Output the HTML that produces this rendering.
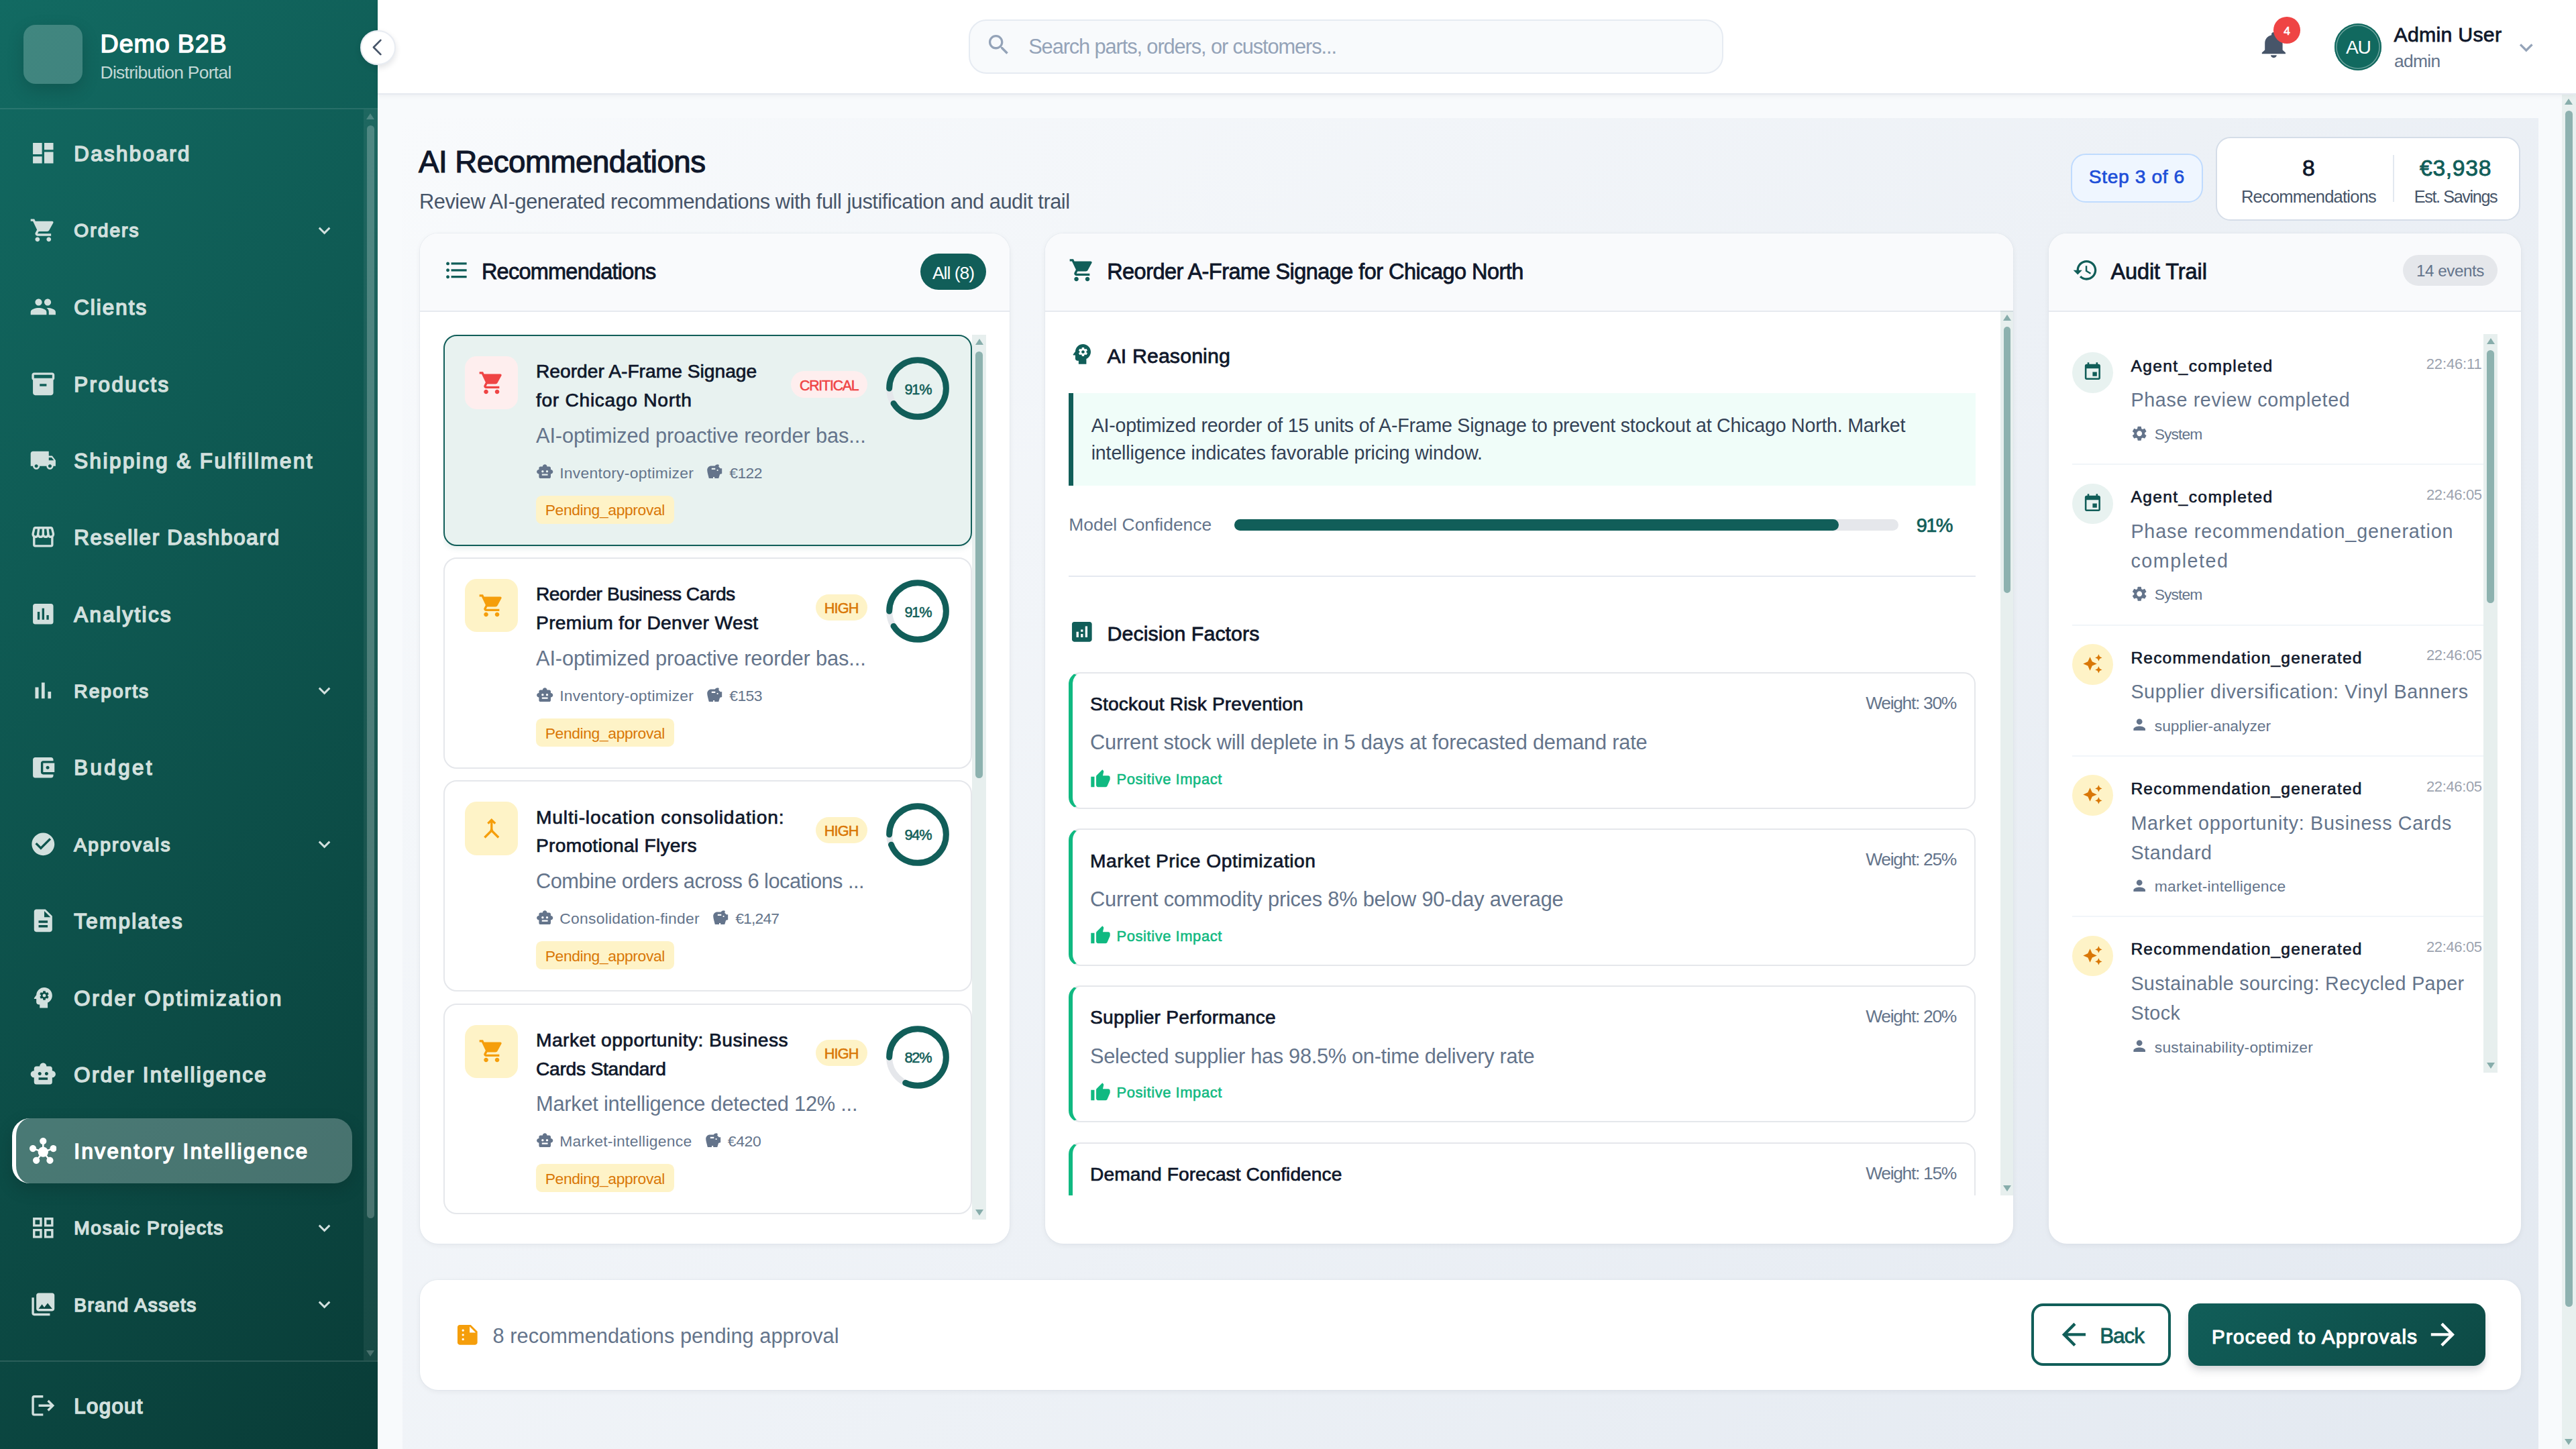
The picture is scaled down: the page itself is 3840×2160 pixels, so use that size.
<!DOCTYPE html>
<html lang="en"><head><meta charset="utf-8"><title>AI Recommendations - Demo B2B Distribution Portal</title>
<style>
*{box-sizing:border-box;margin:0;padding:0}
html,body{width:3840px;height:2160px;overflow:hidden;background:#f8fafc}
body{font-family:"Liberation Sans",sans-serif;color:#0f172a;-webkit-font-smoothing:antialiased}
.app{position:relative;width:3840px;height:2160px;overflow:hidden}
.t{position:relative;top:var(--sh,.0675em);white-space:nowrap}
.ic{display:block;flex:none}
a{text-decoration:none}
h1,h2,h3{font-weight:400;-webkit-text-stroke:.025em currentColor;--sh:.074em}

/* sidebar */
.sb{position:absolute;left:0;top:0;width:563px;height:2160px;background:linear-gradient(135deg,rgb(18,106,98) 0%,rgb(9,60,55) 100%);color:#fff}
.sb-h{position:absolute;left:0;top:0;width:563px;height:163px;border-bottom:2px solid rgba(255,255,255,.1)}
.logo{position:absolute;left:35px;top:36.5px;width:88px;height:88px;border-radius:18px;background:rgba(255,255,255,.2);box-shadow:0 9px 26px rgba(0,0,0,.15)}
.brand{position:absolute;left:149.6px;top:36.7px}
.b1{font-size:37.6px;font-weight:400;-webkit-text-stroke:.04em currentColor;--sh:.105em;line-height:49.5px;color:#fff}
.b2{font-size:26.4px;line-height:39.6px;margin-top:1px;color:rgba(255,255,255,.75)}
.nav{position:absolute;left:0;top:163px;width:542.6px;height:1865px;padding:17.4px 17.6px 0;overflow:hidden}
.ni{display:flex;align-items:center;height:96.8px;margin-bottom:17.6px;padding:0 24px 0 20.2px;border-left:6.6px solid transparent;border-radius:26.4px;color:#d2e0de;font-size:31.2px;font-weight:400;-webkit-text-stroke:.052em currentColor;--sh:.1213em}
.ni .ic{margin-right:25.9px;fill:currentColor}
.ni .t{top:calc(.1213em - 2.2px)}
.ni .sm{font-size:28.1px}
.ni .chev{margin-left:auto;margin-right:0;fill:rgba(255,255,255,.75)}
.ni.on{background:rgba(255,255,255,.25);border-left-color:#fff;color:#fff;box-shadow:0 9px 26px rgba(0,0,0,.15)}
.sb-f{position:absolute;left:0;top:2028px;width:563px;height:132px;border-top:2px solid rgba(255,255,255,.13);padding:16.6px 17.6px 0}
.sb-f .ni{width:507.4px}
.collapse{position:absolute;left:537.4px;top:44.6px;width:52.8px;height:52.8px;border-radius:50%;background:#fff;border:2px solid #e8ecf2;box-shadow:0 4px 10px rgba(15,23,42,.12);display:flex;align-items:center;justify-content:center;z-index:5}

/* scrollbars */
.sbar{position:absolute;width:20.6px;background:rgba(17,94,89,.1)}
.sbar b{position:absolute;left:5px;width:10.6px;border-radius:5.3px;background:rgba(17,94,89,.42)}
.sbar i{position:absolute;left:4.3px;width:0;height:0;border-left:6px solid transparent;border-right:6px solid transparent}
.sbar i.up{top:6px;border-bottom:9px solid rgba(17,94,89,.45)}
.sbar i.dn{bottom:6px;border-top:9px solid rgba(17,94,89,.45)}
.sb-sc{left:542px;top:163px;height:1865px;background:rgba(255,255,255,.06)}
.sb-sc b{top:24px;height:1629px;background:rgba(255,255,255,.22)}
.sb-sc i.up{border-bottom-color:rgba(255,255,255,.22)}
.sb-sc i.dn{border-top-color:rgba(255,255,255,.22)}
.p-sc{left:3819px;top:141px;height:2019px;width:21px;background:#e8f0ef}
.p-sc b{top:24px;height:1783px}

/* header */
.hd{position:absolute;left:563px;top:0;width:3277px;height:141px;background:#fff;border-bottom:2px solid #e5e9f0;box-shadow:0 2px 8px rgba(15,23,42,.05);z-index:3}
.search{position:absolute;left:880.7px;top:29px;width:1125.3px;height:80.6px;border:2px solid #e6ebf2;border-radius:26.4px;background:#f8fafc}
.search .ic{position:absolute;left:23.8px;top:15.5px}
.search .ph{position:absolute;left:87.5px;top:23.9px;font-size:30.8px;line-height:30.8px;color:#94a3b8}
.bell{position:absolute;left:2800px;top:43px;width:52.8px;height:52.8px}
.badge{position:absolute;left:26.2px;top:-18.1px;width:39.6px;height:39.6px;border-radius:50%;background:#ef4444;color:#fff;font-size:17.4px;font-weight:400;-webkit-text-stroke:.04em currentColor;--sh:.105em;line-height:38px;text-align:center}
.avatar{position:absolute;left:2917px;top:35.1px;width:70.4px;height:70.4px;border-radius:50%;background:#11695f;color:#fff;font-size:28.6px;line-height:66.4px;text-align:center;box-shadow:inset 0 0 0 2.2px #11695f,inset 0 0 0 3.6px rgba(255,255,255,.4)}
.uname{position:absolute;left:3005.5px;top:34.8px;font-size:30.3px;line-height:29.8px;font-weight:400;-webkit-text-stroke:.025em currentColor;--sh:.074em;color:#0f172a}
.urole{position:absolute;left:3006px;top:76.4px;font-size:26.4px;line-height:26.4px;color:#64748b}
.uchev{position:absolute;left:3183.2px;top:50.8px}

/* main */
.main{position:absolute;left:563px;top:141px;width:3256px;height:2019px;background:#f8fafc;overflow:hidden}
.page{position:absolute;left:37px;top:35px;width:3184px;height:2196px;background:linear-gradient(135deg,#f8fafc 0%,#e2e8f0 100%)}
.ttl{position:absolute;left:24px;top:39.7px;font-size:45.7px;line-height:46.4px;font-weight:400;-webkit-text-stroke:.025em currentColor;--sh:.074em;color:#0f172a}
.sub{position:absolute;left:25px;top:108.4px;font-size:30.8px;line-height:30.8px;color:#475569}
.step{position:absolute;left:2486.7px;top:53.4px;width:197.4px;height:72.7px;border:2px solid #bfdbfe;border-radius:22px;background:#eff6ff;color:#1d4ed8;font-size:28.2px;font-weight:400;-webkit-text-stroke:.025em currentColor;--sh:.074em;line-height:61.9px;text-align:center}
.stats{position:absolute;left:2702.7px;top:28.4px;width:454.8px;height:124.4px;border:2px solid #d5dde8;border-radius:22px;background:#fff}
.st{position:absolute;top:0;text-align:center}
.st1{left:0;width:273.6px}
.st2{left:267px;width:177.7px}
.sv{position:absolute;left:0;right:0;top:25.3px;font-size:33.7px;line-height:33px;font-weight:400;-webkit-text-stroke:.025em currentColor;--sh:.074em;color:#0f172a}
.sv.g{color:#115e59}
.sl{position:absolute;left:0;right:0;top:73.2px;font-size:25.5px;line-height:25.5px;color:#475569}
.sdiv{position:absolute;left:262.8px;top:24.7px;width:2px;height:69.6px;background:#e2e8f0}

/* cards */
.card{position:absolute;background:#fff;border-radius:27px;box-shadow:0 2px 9px rgba(15,23,42,.06),0 0 0 1px rgba(226,232,240,.45);overflow:hidden}
.c1{left:25.5px;top:171.6px;width:879.7px;height:1506.7px}
.c2{left:957.8px;top:171.6px;width:1443.5px;height:1506.7px}
.c3{left:2454px;top:171.6px;width:704px;height:1506.7px}
.bb{left:25.5px;top:1732px;width:3132.5px;height:163.7px}
.ch{position:absolute;left:0;top:0;right:0;height:117.3px;border-bottom:2px solid #e7eaef;background:#f9fafc;display:flex;align-items:center;padding:0 35.2px 4.5px}
.ch .ic{margin-right:17.6px}
.ch h2{font-size:32.5px;line-height:44px;color:#0f172a}
.all{position:relative;top:2px;margin-left:auto;height:54px;padding:0 18px;border-radius:27px;background:#115e59;color:#fff;font-size:26.4px;line-height:54px}
.cnt{margin-left:auto;height:46.6px;padding:0 19.8px;border-radius:23.3px;background:#e5e7eb;color:#64748b;font-size:24.2px;line-height:46.6px}

/* card1 list */
.list{position:absolute;left:35.9px;top:151.4px;width:788px;height:1319px;overflow:hidden}
.l-sc{left:823.8px;top:151.4px;height:1319px}
.l-sc b{top:24.8px;height:636px}
.rc{position:relative;height:314.6px;margin-bottom:17.6px;border:2px solid #e5e7eb;border-radius:20px;background:#fff}
.rc.sel{border-color:#115e59;background:#e8f2f0;box-shadow:0 4px 9px rgba(17,94,89,.1)}
.tile{position:absolute;left:29.4px;top:30px;width:79.2px;height:79.2px;border-radius:17.6px;display:flex;align-items:center;justify-content:center}
.tile.red{background:#feeeee}
.tile.amb{background:#fef3c7}
.rb{position:absolute;left:135.6px;top:29.1px;width:493.7px}
.rtop{display:flex;align-items:center;justify-content:space-between}
.rtt{font-size:28.2px;line-height:42.9px;font-weight:400;-webkit-text-stroke:.025em currentColor;--sh:.074em;color:#0f172a}
.pri{height:39.3px;padding:0 13.2px;border-radius:20px;font-size:21.7px;line-height:39.3px;font-weight:400;-webkit-text-stroke:.025em currentColor;--sh:.074em}
.pri.crit{background:#feeeee;color:#ef4444}
.pri.high{background:#fef3c7;color:#d97706}
.rd{margin-top:9.6px;font-size:30.8px;line-height:44px;color:#64748b}
.rm{display:flex;align-items:center;margin-top:16.9px;height:34.3px;font-size:22.9px;line-height:34.3px;color:#64748b}
.rm .ic{margin-right:8.8px}
.rm .m1{margin-right:18px}
.pend{display:inline-block;margin-top:18.2px;height:42px;padding:0 13.7px;border-radius:8.8px;background:#fef3c7;color:#d97706;font-size:22.9px;line-height:41.6px;vertical-align:top}
.ring{position:absolute;left:657px;top:30.2px;width:96px;height:96px}
.ring svg{display:block}
.rt{position:absolute;left:0;top:0;width:96px;height:96px;text-align:center;font-size:21.7px;line-height:96px;font-weight:400;-webkit-text-stroke:.025em currentColor;--sh:.074em;color:#115e59}

/* card2 */
.scroll2{position:absolute;left:0;top:115.8px;width:1423.8px;height:1319px;overflow:hidden}
.m-sc{left:1423.8px;top:115.8px;height:1319px}
.m-sc b{top:23.2px;height:397px}
.sh{position:absolute;left:35.5px;top:37.6px;height:54px;display:flex;align-items:center}
.sh .ic{margin-right:17.6px}
.sh h3{font-size:30.4px;line-height:54px;color:#0f172a}
.sh2{top:451.3px}
.reason{position:absolute;left:35.5px;top:123.1px;width:1351.4px;height:137.5px;border-left:7px solid #115e59;border-radius:0;background:#f0fdf9;padding:25.5px 26.4px 0 26.4px;font-size:28.6px;line-height:41px;color:#334155}
.conf{position:absolute;left:35.5px;top:300px;width:1351.4px;height:40px}
.cl{position:absolute;left:0;top:3.8px;font-size:26.4px;line-height:26.4px;color:#64748b}
.bar{position:absolute;left:246.7px;top:10.2px;width:990px;height:17.5px;border-radius:8.8px;background:#e5e7eb}
.fill{width:91%;height:100%;border-radius:8.8px;background:#115e59}
.cv{position:absolute;left:1263.5px;top:3.2px;font-size:28.9px;line-height:29.5px;font-weight:400;-webkit-text-stroke:.025em currentColor;--sh:.074em;color:#115e59}
.hr{position:absolute;left:35.5px;top:394.6px;width:1351.4px;height:2px;background:#e5e9f0}
.fc{position:absolute;left:35.5px;width:1351.4px;height:204.3px;border:2px solid #e5e7eb;border-left:6.6px solid #10b981;border-radius:17.6px;background:#fff}
.fc:nth-of-type(6){top:538.3px}
.fc:nth-of-type(7){top:772px}
.fc:nth-of-type(8){top:1005.7px}
.fc:nth-of-type(9){top:1239.4px}
.fh{position:absolute;left:25.8px;right:26.7px;top:0}
.ft{position:absolute;left:0;top:29.2px;font-size:28.2px;line-height:29.8px;font-weight:400;-webkit-text-stroke:.025em currentColor;--sh:.074em;color:#0f172a}
.fw{position:absolute;right:0;top:29.3px;font-size:26.4px;line-height:26.4px;color:#64748b}
.fd{position:absolute;left:25.8px;top:86.7px;font-size:30.8px;line-height:30.8px;color:#64748b}
.fi{position:absolute;left:25.8px;top:139.5px;height:34px;display:flex;align-items:center;font-size:22.0px;line-height:34px;font-weight:400;-webkit-text-stroke:.025em currentColor;--sh:.074em;color:#10b981}
.fi .ic{margin-right:8.5px}

/* card3 */
.elist{position:absolute;left:35.2px;top:150.2px;width:613.2px;height:1101px;overflow:hidden}
.a-sc{left:648.4px;top:150.2px;height:1101px}
.a-sc b{top:24px;height:377.4px}
.ev{position:relative;padding:26.4px 0 28.3px 87.2px;border-bottom:2px solid #f1f5f9}
.ev:last-child{border-bottom:0}
.eav{position:absolute;left:0;top:27.4px;width:60.8px;height:60.8px;border-radius:50%;display:flex;align-items:center;justify-content:center;padding-bottom:2px}
.eav.g{background:#e8f2f0}
.eav.a{background:#fef3c7}
.eh{position:relative;height:39.6px}
.et{font-size:24.6px;line-height:39.6px;font-weight:400;-webkit-text-stroke:.025em currentColor;--sh:.074em;color:#0f172a}
.etm{position:absolute;right:2.7px;top:-3px;font-size:22px;line-height:39.6px;color:#9ca3af}
.ed{margin-top:8.8px;font-size:28.7px;line-height:44px;color:#64748b}
.em{display:flex;align-items:center;margin-top:12px;height:34.3px;font-size:22.9px;line-height:34.3px;color:#64748b}
.em .ic{margin-right:9px}

/* bottom bar */
.bl{position:absolute;left:51.5px;top:0;height:163.7px;display:flex;align-items:center;font-size:30.8px;color:#64748b}
.bl .ic{margin-right:18px}
.btn{position:absolute;top:34.7px;height:93.6px;border-radius:17.6px;display:flex;align-items:center;font-size:31.5px;font-weight:400;-webkit-text-stroke:.025em currentColor;--sh:.074em}
.back{left:2402.5px;width:208px;border:4.4px solid #115e59;background:#fff;color:#115e59;padding-left:33.4px}
.back .ic{margin-right:12px}
.go{left:2636.9px;width:442.8px;background:linear-gradient(135deg,#115e59 0%,#0d4a45 100%);color:#fff;padding-left:34.5px;box-shadow:0 9px 13px -2px rgba(15,23,42,.14),0 4px 9px -2px rgba(15,23,42,.08)}
.go .ic{margin-left:11px}
.go{font-size:29.4px;-webkit-text-stroke:.04em currentColor;--sh:.105em}

</style></head>
<body>
<div class="app">

<aside class="sb">
  <div class="sb-h">
    <div class="logo"></div>
    <div class="brand"><div class="b1"><span class="t" style="letter-spacing:0.91px;">Demo B2B</span></div><div class="b2"><span class="t" style="letter-spacing:-0.70px;">Distribution Portal</span></div></div>
  </div>
  <nav class="nav">
    <a class="ni"><svg class="ic " width="40.6" height="40.6" viewBox="0 0 24 24" style="fill:currentColor;"><path d="M3 13h8V3H3v10zm0 8h8v-6H3v6zm10 0h8V11h-8v10zm0-18v6h8V3h-8z"/></svg><span class="t nl" style="letter-spacing:2.45px;">Dashboard</span></a><a class="ni"><svg class="ic " width="40.6" height="40.6" viewBox="0 0 24 24" style="fill:currentColor;"><path d="M7 18c-1.1 0-1.99.9-1.99 2S5.9 22 7 22s2-.9 2-2-.9-2-2-2zM1 2v2h2l3.6 7.59-1.35 2.45c-.16.28-.25.61-.25.96 0 1.1.9 2 2 2h12v-2H7.42c-.14 0-.25-.11-.25-.25l.03-.12.9-1.63h7.45c.75 0 1.41-.41 1.75-1.03l3.58-6.49c.08-.14.12-.31.12-.48 0-.55-.45-1-1-1H5.21l-.94-2H1zm16 16c-1.1 0-1.99.9-1.99 2s.89 2 1.99 2 2-.9 2-2-.9-2-2-2z"/></svg><span class="t nl sm" style="letter-spacing:2.10px;">Orders</span><svg class="ic chev" width="35.2" height="35.2" viewBox="0 0 24 24" style="fill:currentColor;"><path d="M16.59 8.59L12 13.170 7.410 8.590 6 10l6 6 6-6z"/></svg></a><a class="ni"><svg class="ic " width="40.6" height="40.6" viewBox="0 0 24 24" style="fill:currentColor;"><path d="M16 11c1.66 0 2.99-1.34 2.99-3S17.66 5 16 5c-1.66 0-3 1.34-3 3s1.34 3 3 3zm-8 0c1.66 0 2.99-1.34 2.99-3S9.66 5 8 5C6.34 5 5 6.34 5 8s1.34 3 3 3zm0 2c-2.33 0-7 1.17-7 3.5V19h14v-2.5c0-2.33-4.67-3.5-7-3.5zm8 0c-.29 0-.62.02-.97.05 1.16.84 1.97 1.97 1.97 3.45V19h6v-2.5c0-2.33-4.67-3.5-7-3.5z"/></svg><span class="t nl" style="letter-spacing:2.07px;">Clients</span></a><a class="ni"><svg class="ic " width="40.6" height="40.6" viewBox="0 0 24 24" style="fill:currentColor;"><path d="M20 2H4c-1 0-2 .9-2 2v3.01c0 .72.43 1.34 1 1.69V20c0 1.1 1.1 2 2 2h14c.9 0 2-.9 2-2V8.7c.57-.35 1-.97 1-1.69V4c0-1.1-1-2-2-2zm-5 12H9v-2h6v2zm5-7H4V4h16v3z"/></svg><span class="t nl" style="letter-spacing:2.54px;">Products</span></a><a class="ni"><svg class="ic " width="40.6" height="40.6" viewBox="0 0 24 24" style="fill:currentColor;"><path d="M20 8h-3V4H3c-1.1 0-2 .9-2 2v11h2c0 1.66 1.34 3 3 3s3-1.34 3-3h6c0 1.66 1.34 3 3 3s3-1.34 3-3h2v-5l-3-4zM6 18.5c-.83 0-1.5-.67-1.5-1.5s.67-1.5 1.5-1.5 1.5.67 1.5 1.5-.67 1.5-1.5 1.5zm13.5-9l1.96 2.5H17V9.5h2.5zm-1.5 9c-.83 0-1.5-.67-1.5-1.5s.67-1.5 1.5-1.5 1.5.67 1.5 1.5-.67 1.5-1.5 1.5z"/></svg><span class="t nl" style="letter-spacing:2.55px;">Shipping &amp; Fulfillment</span></a><a class="ni"><svg class="ic " width="40.6" height="40.6" viewBox="0 0 24 24" style="fill:currentColor;"><path d="M21.9 8.89l-1.05-4.37c-.22-.9-1-1.52-1.91-1.52H5.05c-.9 0-1.69.63-1.9 1.52L2.1 8.89c-.24 1.02-.02 2.06.62 2.88.08.11.19.19.28.29V19c0 1.1.9 2 2 2h14c1.1 0 2-.9 2-2v-6.94c.09-.09.2-.18.28-.28.64-.82.87-1.87.62-2.89zm-2.99-3.9l1.05 4.37c.1.42.01.84-.25 1.17-.14.18-.44.47-.94.47-.61 0-1.14-.49-1.21-1.14L16.98 5l1.93-.01zM13 5h1.96l.54 4.52c.05.39-.07.78-.33 1.07-.22.26-.54.41-.95.41-.67 0-1.22-.59-1.22-1.31V5zM8.49 9.52L9.04 5H11v4.69c0 .72-.55 1.31-1.29 1.31-.34 0-.65-.15-.89-.41-.25-.29-.37-.68-.33-1.07zm-4.45-.16L5.05 5h1.97l-.58 4.86c-.08.65-.6 1.14-1.21 1.14-.49 0-.8-.29-.93-.47-.27-.32-.36-.75-.26-1.17zM5 19v-6.03c.08.01.15.03.23.03.87 0 1.66-.36 2.24-.95.6.6 1.4.95 2.31.95.87 0 1.65-.36 2.23-.93.59.57 1.39.93 2.29.93.84 0 1.64-.35 2.24-.95.58.59 1.37.95 2.24.95.08 0 .15-.02.23-.03V19H5z"/></svg><span class="t nl" style="letter-spacing:1.77px;">Reseller Dashboard</span></a><a class="ni"><svg class="ic " width="40.6" height="40.6" viewBox="0 0 24 24" style="fill:currentColor;"><path d="M19 3H5c-1.1 0-2 .9-2 2v14c0 1.1.9 2 2 2h14c1.1 0 2-.9 2-2V5c0-1.1-.9-2-2-2zM9 17H7v-7h2v7zm4 0h-2V7h2v10zm4 0h-2v-4h2v4z"/></svg><span class="t nl" style="letter-spacing:2.43px;">Analytics</span></a><a class="ni"><svg class="ic " width="40.6" height="40.6" viewBox="0 0 24 24" style="fill:currentColor;"><path d="M5 9.2h3V19H5zM10.6 5h2.8v14h-2.8zm5.6 8H19v6h-2.8z"/></svg><span class="t nl sm" style="letter-spacing:2.08px;">Reports</span><svg class="ic chev" width="35.2" height="35.2" viewBox="0 0 24 24" style="fill:currentColor;"><path d="M16.59 8.59L12 13.170 7.410 8.590 6 10l6 6 6-6z"/></svg></a><a class="ni"><svg class="ic " width="40.6" height="40.6" viewBox="0 0 24 24" style="fill:currentColor;"><path d="M21 18v1c0 1.1-.9 2-2 2H5c-1.11 0-2-.9-2-2V5c0-1.1.89-2 2-2h14c1.1 0 2 .9 2 2v1h-9c-1.11 0-2 .9-2 2v8c0 1.1.89 2 2 2h9zm-9-2h10V8H12v8zm4-2.5c-.83 0-1.5-.67-1.5-1.5s.67-1.5 1.5-1.5 1.5.67 1.5 1.5-.67 1.5-1.5 1.5z"/></svg><span class="t nl" style="letter-spacing:3.48px;">Budget</span></a><a class="ni"><svg class="ic " width="40.6" height="40.6" viewBox="0 0 24 24" style="fill:currentColor;"><path d="M12 2C6.48 2 2 6.48 2 12s4.48 10 10 10 10-4.48 10-10S17.52 2 12 2zm-2 15l-5-5 1.41-1.41L10 14.17l7.59-7.59L19 8l-9 9z"/></svg><span class="t nl sm" style="letter-spacing:2.29px;">Approvals</span><svg class="ic chev" width="35.2" height="35.2" viewBox="0 0 24 24" style="fill:currentColor;"><path d="M16.59 8.59L12 13.170 7.410 8.590 6 10l6 6 6-6z"/></svg></a><a class="ni"><svg class="ic " width="40.6" height="40.6" viewBox="0 0 24 24" style="fill:currentColor;"><path d="M14 2H6c-1.1 0-1.99.9-1.99 2L4 20c0 1.1.89 2 1.99 2H18c1.1 0 2-.9 2-2V8l-6-6zm2 16H8v-2h8v2zm0-4H8v-2h8v2zm-3-5V3.5L18.5 9H13z"/></svg><span class="t nl" style="letter-spacing:2.40px;">Templates</span></a><a class="ni"><svg class="ic " width="40.6" height="40.6" viewBox="0 0 24 24" style="fill:currentColor;"><path d="M13 8.57c-.79 0-1.43.64-1.43 1.43s.64 1.43 1.43 1.43 1.43-.64 1.43-1.43-.64-1.43-1.43-1.43zM13 3C9.25 3 6.2 5.94 6.02 9.64L4.1 12.2c-.25.33-.01.8.4.8H6v3c0 1.1.9 2 2 2h1v3h7v-4.68c2.36-1.12 4-3.53 4-6.32 0-3.87-3.13-7-7-7zm3 7c0 .13-.01.26-.02.39l.83.66c.08.06.1.16.05.25l-.8 1.39c-.05.09-.16.12-.24.09l-.99-.4c-.21.16-.43.29-.67.39L14 13.83c-.01.1-.1.17-.2.17h-1.6c-.1 0-.18-.07-.2-.17l-.15-1.06c-.25-.1-.47-.23-.68-.39l-.99.4c-.09.03-.2 0-.25-.09l-.8-1.39c-.05-.08-.03-.19.05-.25l.84-.66c-.01-.13-.02-.26-.02-.39 0-.13.02-.27.04-.39l-.85-.66c-.08-.06-.1-.16-.05-.26l.8-1.38c.05-.09.15-.12.24-.09l1 .4c.2-.15.43-.29.67-.39L12 6.17c.02-.1.1-.17.2-.17h1.6c.1 0 .18.07.2.17l.15 1.06c.24.1.46.23.67.39l1-.4c.09-.03.2 0 .24.09l.8 1.38c.05.09.03.2-.05.26l-.85.66c.03.12.04.25.04.39z"/></svg><span class="t nl" style="letter-spacing:2.78px;">Order Optimization</span></a><a class="ni"><svg class="ic " width="40.6" height="40.6" viewBox="0 0 24 24" style="fill:currentColor;"><path d="M20 9V7c0-1.1-.9-2-2-2h-3c0-1.66-1.34-3-3-3S9 3.34 9 5H6c-1.1 0-2 .9-2 2v2c-1.66 0-3 1.34-3 3s1.34 3 3 3v4c0 1.1.9 2 2 2h12c1.1 0 2-.9 2-2v-4c1.66 0 3-1.34 3-3s-1.34-3-3-3zM7.5 11.5c0-.83.67-1.5 1.5-1.5s1.5.67 1.5 1.5S9.830 13 9 13s-1.5-.67-1.5-1.5zM16 17H8v-2h8v2zm-1-4c-.83 0-1.5-.67-1.5-1.5S14.170 10 15 10s1.5.67 1.5 1.5S15.830 13 15 13z"/></svg><span class="t nl" style="letter-spacing:2.36px;">Order Intelligence</span></a><a class="ni on"><svg class="ic " width="40.6" height="40.6" viewBox="0 0 24 24" style="fill:currentColor;"><path d="M8.4 18.2c.38.5.6 1.12.6 1.8 0 1.66-1.34 3-3 3s-3-1.34-3-3 1.34-3 3-3c.44 0 .85.09 1.23.26l1.41-1.77c-.92-1.03-1.29-2.39-1.09-3.69l-2.03-.68C4.98 11.950 4.060 12.5 3 12.5c-1.66 0-3-1.34-3-3s1.34-3 3-3 3 1.34 3 3c0 .07 0 .14-.01.21l2.03.68c.64-1.21 1.82-2.09 3.22-2.32V5.91C9.960 5.570 9 4.400 9 3c0-1.66 1.34-3 3-3s3 1.34 3 3c0 1.400-.96 2.570-2.25 2.910v2.160c1.400.23 2.580 1.110 3.220 2.320l2.030-.68C18 9.640 18 9.570 18 9.500c0-1.660 1.340-3 3-3s3 1.340 3 3-1.340 3-3 3c-1.060 0-1.980-.55-2.520-1.370l-2.030.68c.2 1.290-.16 2.650-1.090 3.690l1.410 1.770c.38-.17.79-.26 1.230-.26 1.660 0 3 1.340 3 3s-1.340 3-3 3-3-1.340-3-3c0-.68.22-1.300.6-1.800l-1.410-1.770c-1.350.75-3.010.76-4.370 0L8.400 18.200z"/></svg><span class="t nl" style="letter-spacing:2.53px;">Inventory Intelligence</span></a><a class="ni"><svg class="ic " width="40.6" height="40.6" viewBox="0 0 24 24" style="fill:currentColor;"><path d="M3 3v8h8V3H3zm6 6H5V5h4v4zm-6 4v8h8v-8H3zm6 6H5v-4h4v4zm4-16v8h8V3h-8zm6 6h-4V5h4v4zm-6 4v8h8v-8h-8zm6 6h-4v-4h4v4z"/></svg><span class="t nl sm" style="letter-spacing:1.69px;">Mosaic Projects</span><svg class="ic chev" width="35.2" height="35.2" viewBox="0 0 24 24" style="fill:currentColor;"><path d="M16.59 8.59L12 13.170 7.410 8.590 6 10l6 6 6-6z"/></svg></a><a class="ni"><svg class="ic " width="40.6" height="40.6" viewBox="0 0 24 24" style="fill:currentColor;"><path d="M22 16V4c0-1.1-.9-2-2-2H8c-1.1 0-2 .9-2 2v12c0 1.1.9 2 2 2h12c1.1 0 2-.9 2-2zm-11-4l2.030 2.710L16 11l4 5H8l3-4zM2 6v14c0 1.1.9 2 2 2h14v-2H4V6H2z"/></svg><span class="t nl sm" style="letter-spacing:1.50px;">Brand Assets</span><svg class="ic chev" width="35.2" height="35.2" viewBox="0 0 24 24" style="fill:currentColor;"><path d="M16.59 8.59L12 13.170 7.410 8.590 6 10l6 6 6-6z"/></svg></a>
  </nav>
  <div class="sbar sb-sc"><i class="up"></i><b></b><i class="dn"></i></div>
  <div class="sb-f"><a class="ni"><svg class="ic " width="40.6" height="40.6" viewBox="0 0 24 24" style="fill:currentColor;"><path d="M17 7l-1.410 1.410L18.170 11H8v2h10.170l-2.580 2.580L17 17l5-5zM4 5h8V3H4c-1.1 0-2 .9-2 2v14c0 1.1.9 2 2 2h8v-2H4V5z"/></svg><span class="t nl" style="letter-spacing:1.36px;">Logout</span></a></div>
</aside>
<div class="collapse"><svg width="48.8" height="48.8" viewBox="0 0 48.8 48.8" style="display:block;fill:none;stroke:#475569;stroke-width:2.7;stroke-linecap:round;stroke-linejoin:round"><path d="M28.4 12.9 L17.9 23.5 L28.4 34.1"/></svg></div>


<header class="hd">
  <div class="search"><svg class="ic " width="39.6" height="39.6" viewBox="0 0 24 24" style="fill:#94a3b8;"><path d="M15.5 14h-.79l-.28-.27C15.410 12.590 16 11.110 16 9.500 16 5.910 13.090 3 9.500 3S3 5.910 3 9.500 5.910 16 9.500 16c1.610 0 3.090-.59 4.230-1.570l.27.28v.79l5 4.990L20.490 19l-4.990-5zm-6 0C7.010 14 5 11.990 5 9.500S7.010 5 9.500 5 14 7.010 14 9.500 11.990 14 9.500 14z"/></svg><span class="t ph" style="letter-spacing:-1.11px;">Search parts, orders, or customers...</span></div>
  <div class="bell"><svg class="ic" width="52.8" height="47.2" viewBox="0 0 24 24" preserveAspectRatio="none" style="fill:#475569"><path d="M12 22c1.1 0 2-.9 2-2h-4c0 1.1.89 2 2 2zm6-6v-5c0-3.070-1.640-5.640-4.500-6.320V4c0-.83-.67-1.500-1.500-1.500s-1.500.67-1.500 1.500v.68C7.630 5.360 6 7.920 6 11v5l-2 2v1h16v-1l-2-2z"/></svg><span class="badge"><span class="t">4</span></span></div>
  <div class="avatar"><span class="t" style="letter-spacing:-1.55px;font-size:28.25px;">AU</span></div>
  <div class="uname"><span class="t" style="letter-spacing:0.25px;">Admin User</span></div>
  <div class="urole"><span class="t" style="letter-spacing:-0.70px;">admin</span></div>
  <svg class="ic uchev" width="39.6" height="39.6" viewBox="0 0 24 24" style="fill:#94a3b8;"><path d="M16.59 8.59L12 13.170 7.410 8.590 6 10l6 6 6-6z"/></svg>
</header>

<main class="main">
  <div class="page">
    
<h1 class="ttl"><span class="t" style="letter-spacing:-0.51px;">AI Recommendations</span></h1>
<p class="sub"><span class="t" style="letter-spacing:-0.47px;">Review AI-generated recommendations with full justification and audit trail</span></p>
<div class="step"><span class="t" style="letter-spacing:0.61px;">Step 3 of 6</span></div>
<div class="stats">
  <div class="st st1"><div class="sv"><span class="t">8</span></div><div class="sl"><span class="t" style="letter-spacing:-0.76px;">Recommendations</span></div></div>
  <div class="sdiv"></div>
  <div class="st st2"><div class="sv g"><span class="t" style="letter-spacing:0.68px;">€3,938</span></div><div class="sl"><span class="t" style="letter-spacing:-1.39px;font-size:25.24px;">Est. Savings</span></div></div>
</div>

    
<section class="card c1">
  <div class="ch"><svg class="ic " width="39.6" height="39.6" viewBox="0 0 24 24" style="fill:#115e59;"><path d="M4 10.5c-.83 0-1.500.67-1.500 1.500s.67 1.500 1.500 1.500 1.500-.67 1.500-1.500-.67-1.500-1.500-1.500zm0-6c-.83 0-1.500.67-1.500 1.500S3.170 7.500 4 7.500 5.500 6.830 5.500 6 4.830 4.500 4 4.500zm0 12c-.83 0-1.500.68-1.500 1.500s.68 1.500 1.500 1.500 1.500-.68 1.500-1.500-.67-1.500-1.500-1.500zM7 19h14v-2H7v2zm0-6h14v-2H7v2zm0-8v2h14V5H7z"/></svg><h2><span class="t" style="letter-spacing:-0.76px;">Recommendations</span></h2><div class="all"><span class="t" style="letter-spacing:-0.97px;">All (8)</span></div></div>
  <div class="list">
    <div class="rc sel">
  <div class="tile red"><svg class="ic " width="39.6" height="39.6" viewBox="0 0 24 24" style="fill:#ef4444;"><path d="M7 18c-1.1 0-1.99.9-1.99 2S5.9 22 7 22s2-.9 2-2-.9-2-2-2zM1 2v2h2l3.6 7.59-1.35 2.45c-.16.28-.25.61-.25.96 0 1.1.9 2 2 2h12v-2H7.42c-.14 0-.25-.11-.25-.25l.03-.12.9-1.63h7.45c.75 0 1.41-.41 1.75-1.03l3.58-6.49c.08-.14.12-.31.12-.48 0-.55-.45-1-1-1H5.21l-.94-2H1zm16 16c-1.1 0-1.99.9-1.99 2s.89 2 1.99 2 2-.9 2-2-.9-2-2-2z"/></svg></div>
  <div class="rb">
    <div class="rtop">
      <div class="rtt"><span class="t" style="letter-spacing:0.01px;">Reorder A-Frame Signage</span><br><span class="t" style="letter-spacing:0.69px;">for Chicago North</span></div>
      <div class="pri crit"><span class="t" style="letter-spacing:-1.17px;font-size:21.25px;">CRITICAL</span></div>
    </div>
    <div class="rd"><span class="t" style="letter-spacing:-0.13px;">AI-optimized proactive reorder bas...</span></div>
    <div class="rm"><svg class="ic " width="26.4" height="26.4" viewBox="0 0 24 24" style="fill:#64748b;"><path d="M20 9V7c0-1.1-.9-2-2-2h-3c0-1.66-1.34-3-3-3S9 3.34 9 5H6c-1.1 0-2 .9-2 2v2c-1.66 0-3 1.34-3 3s1.34 3 3 3v4c0 1.1.9 2 2 2h12c1.1 0 2-.9 2-2v-4c1.66 0 3-1.34 3-3s-1.34-3-3-3zM7.5 11.5c0-.83.67-1.5 1.5-1.5s1.5.67 1.5 1.5S9.830 13 9 13s-1.5-.67-1.5-1.5zM16 17H8v-2h8v2zm-1-4c-.83 0-1.5-.67-1.5-1.5S14.170 10 15 10s1.5.67 1.5 1.5S15.830 13 15 13z"/></svg><span class="t m1" style="letter-spacing:0.28px;">Inventory-optimizer</span><svg class="ic " width="26.4" height="26.4" viewBox="0 0 24 24" style="fill:#64748b;"><path d="M19.830 7.500l-2.270-2.270c.07-.42.18-.81.32-1.150.08-.18.12-.37.12-.58 0-.83-.67-1.500-1.500-1.500-1.640 0-3.090.79-4 2h-5C4.460 4 2 6.460 2 9.500S4.500 21 4.500 21H10v-2h2v2h5.500l1.680-5.590 2.820-.94V7.500h-2.170zM13 9H8V7h5v2zm3 2c-.55 0-1-.45-1-1s.45-1 1-1 1 .45 1 1-.45 1-1 1z"/></svg><span class="t m2" style="letter-spacing:-0.62px;">€122</span></div>
    <div class="pend"><span class="t" style="letter-spacing:-0.39px;">Pending_approval</span></div>
  </div>
  <div class="ring"><svg width="96" height="96" viewBox="0 0 96 96"><circle cx="48" cy="48" r="42.35" fill="none" stroke="#e5e7eb" stroke-width="9"/><circle cx="48" cy="48" r="42.35" fill="none" stroke="#115e59" stroke-width="9" stroke-linecap="round" stroke-dasharray="242.1 266.1" transform="rotate(180 48 48)"/></svg><div class="rt"><span class="t" style="letter-spacing:-1.16px;">91%</span></div></div>
</div><div class="rc">
  <div class="tile amb"><svg class="ic " width="39.6" height="39.6" viewBox="0 0 24 24" style="fill:#f59e0b;"><path d="M7 18c-1.1 0-1.99.9-1.99 2S5.9 22 7 22s2-.9 2-2-.9-2-2-2zM1 2v2h2l3.6 7.59-1.35 2.45c-.16.28-.25.61-.25.96 0 1.1.9 2 2 2h12v-2H7.42c-.14 0-.25-.11-.25-.25l.03-.12.9-1.63h7.45c.75 0 1.41-.41 1.75-1.03l3.58-6.49c.08-.14.12-.31.12-.48 0-.55-.45-1-1-1H5.21l-.94-2H1zm16 16c-1.1 0-1.99.9-1.99 2s.89 2 1.99 2 2-.9 2-2-.9-2-2-2z"/></svg></div>
  <div class="rb">
    <div class="rtop">
      <div class="rtt"><span class="t" style="letter-spacing:-0.47px;">Reorder Business Cards</span><br><span class="t" style="letter-spacing:0.34px;">Premium for Denver West</span></div>
      <div class="pri high"><span class="t" style="letter-spacing:-0.87px;">HIGH</span></div>
    </div>
    <div class="rd"><span class="t" style="letter-spacing:-0.13px;">AI-optimized proactive reorder bas...</span></div>
    <div class="rm"><svg class="ic " width="26.4" height="26.4" viewBox="0 0 24 24" style="fill:#64748b;"><path d="M20 9V7c0-1.1-.9-2-2-2h-3c0-1.66-1.34-3-3-3S9 3.34 9 5H6c-1.1 0-2 .9-2 2v2c-1.66 0-3 1.34-3 3s1.34 3 3 3v4c0 1.1.9 2 2 2h12c1.1 0 2-.9 2-2v-4c1.66 0 3-1.34 3-3s-1.34-3-3-3zM7.5 11.5c0-.83.67-1.5 1.5-1.5s1.5.67 1.5 1.5S9.830 13 9 13s-1.5-.67-1.5-1.5zM16 17H8v-2h8v2zm-1-4c-.83 0-1.5-.67-1.5-1.5S14.170 10 15 10s1.5.67 1.5 1.5S15.830 13 15 13z"/></svg><span class="t m1" style="letter-spacing:0.28px;">Inventory-optimizer</span><svg class="ic " width="26.4" height="26.4" viewBox="0 0 24 24" style="fill:#64748b;"><path d="M19.830 7.500l-2.270-2.270c.07-.42.18-.81.32-1.150.08-.18.12-.37.12-.58 0-.83-.67-1.500-1.500-1.500-1.640 0-3.090.79-4 2h-5C4.460 4 2 6.460 2 9.500S4.500 21 4.500 21H10v-2h2v2h5.500l1.680-5.590 2.820-.94V7.500h-2.170zM13 9H8V7h5v2zm3 2c-.55 0-1-.45-1-1s.45-1 1-1 1 .45 1 1-.45 1-1 1z"/></svg><span class="t m2" style="letter-spacing:-0.62px;">€153</span></div>
    <div class="pend"><span class="t" style="letter-spacing:-0.39px;">Pending_approval</span></div>
  </div>
  <div class="ring"><svg width="96" height="96" viewBox="0 0 96 96"><circle cx="48" cy="48" r="42.35" fill="none" stroke="#e5e7eb" stroke-width="9"/><circle cx="48" cy="48" r="42.35" fill="none" stroke="#115e59" stroke-width="9" stroke-linecap="round" stroke-dasharray="242.1 266.1" transform="rotate(180 48 48)"/></svg><div class="rt"><span class="t" style="letter-spacing:-1.16px;">91%</span></div></div>
</div><div class="rc">
  <div class="tile amb"><svg class="ic " width="39.6" height="39.6" viewBox="0 0 24 24" style="fill:#f59e0b;"><path d="M6.410 21L5 19.590l4.830-4.830c.75-.75 1.170-1.770 1.170-2.830v-5.100L9.410 8.410 8 7l4-4 4 4-1.410 1.410L13 6.830v5.100c0 1.060.42 2.080 1.170 2.830L19 19.590 17.590 21 12 15.410 6.410 21z"/></svg></div>
  <div class="rb">
    <div class="rtop">
      <div class="rtt"><span class="t" style="letter-spacing:0.83px;">Multi-location consolidation:</span><br><span class="t" style="letter-spacing:0.27px;">Promotional Flyers</span></div>
      <div class="pri high"><span class="t" style="letter-spacing:-0.87px;">HIGH</span></div>
    </div>
    <div class="rd"><span class="t" style="letter-spacing:-0.52px;">Combine orders across 6 locations ...</span></div>
    <div class="rm"><svg class="ic " width="26.4" height="26.4" viewBox="0 0 24 24" style="fill:#64748b;"><path d="M20 9V7c0-1.1-.9-2-2-2h-3c0-1.66-1.34-3-3-3S9 3.34 9 5H6c-1.1 0-2 .9-2 2v2c-1.66 0-3 1.34-3 3s1.34 3 3 3v4c0 1.1.9 2 2 2h12c1.1 0 2-.9 2-2v-4c1.66 0 3-1.34 3-3s-1.34-3-3-3zM7.5 11.5c0-.83.67-1.5 1.5-1.5s1.5.67 1.5 1.5S9.830 13 9 13s-1.5-.67-1.5-1.5zM16 17H8v-2h8v2zm-1-4c-.83 0-1.5-.67-1.5-1.5S14.170 10 15 10s1.5.67 1.5 1.5S15.830 13 15 13z"/></svg><span class="t m1" style="letter-spacing:0.26px;">Consolidation-finder</span><svg class="ic " width="26.4" height="26.4" viewBox="0 0 24 24" style="fill:#64748b;"><path d="M19.830 7.500l-2.270-2.270c.07-.42.18-.81.32-1.150.08-.18.12-.37.12-.58 0-.83-.67-1.500-1.500-1.500-1.640 0-3.090.79-4 2h-5C4.460 4 2 6.460 2 9.500S4.500 21 4.500 21H10v-2h2v2h5.500l1.680-5.590 2.820-.94V7.500h-2.170zM13 9H8V7h5v2zm3 2c-.55 0-1-.45-1-1s.45-1 1-1 1 .45 1 1-.45 1-1 1z"/></svg><span class="t m2" style="letter-spacing:-0.83px;">€1,247</span></div>
    <div class="pend"><span class="t" style="letter-spacing:-0.39px;">Pending_approval</span></div>
  </div>
  <div class="ring"><svg width="96" height="96" viewBox="0 0 96 96"><circle cx="48" cy="48" r="42.35" fill="none" stroke="#e5e7eb" stroke-width="9"/><circle cx="48" cy="48" r="42.35" fill="none" stroke="#115e59" stroke-width="9" stroke-linecap="round" stroke-dasharray="250.1 266.1" transform="rotate(180 48 48)"/></svg><div class="rt"><span class="t" style="letter-spacing:-1.16px;">94%</span></div></div>
</div><div class="rc">
  <div class="tile amb"><svg class="ic " width="39.6" height="39.6" viewBox="0 0 24 24" style="fill:#f59e0b;"><path d="M7 18c-1.1 0-1.99.9-1.99 2S5.9 22 7 22s2-.9 2-2-.9-2-2-2zM1 2v2h2l3.6 7.59-1.35 2.45c-.16.28-.25.61-.25.96 0 1.1.9 2 2 2h12v-2H7.42c-.14 0-.25-.11-.25-.25l.03-.12.9-1.63h7.45c.75 0 1.41-.41 1.75-1.03l3.58-6.49c.08-.14.12-.31.12-.48 0-.55-.45-1-1-1H5.21l-.94-2H1zm16 16c-1.1 0-1.99.9-1.99 2s.89 2 1.99 2 2-.9 2-2-.9-2-2-2z"/></svg></div>
  <div class="rb">
    <div class="rtop">
      <div class="rtt"><span class="t" style="letter-spacing:0.45px;">Market opportunity: Business</span><br><span class="t" style="letter-spacing:-0.27px;">Cards Standard</span></div>
      <div class="pri high"><span class="t" style="letter-spacing:-0.87px;">HIGH</span></div>
    </div>
    <div class="rd"><span class="t" style="letter-spacing:-0.24px;">Market intelligence detected 12% ...</span></div>
    <div class="rm"><svg class="ic " width="26.4" height="26.4" viewBox="0 0 24 24" style="fill:#64748b;"><path d="M20 9V7c0-1.1-.9-2-2-2h-3c0-1.66-1.34-3-3-3S9 3.34 9 5H6c-1.1 0-2 .9-2 2v2c-1.66 0-3 1.34-3 3s1.34 3 3 3v4c0 1.1.9 2 2 2h12c1.1 0 2-.9 2-2v-4c1.66 0 3-1.34 3-3s-1.34-3-3-3zM7.5 11.5c0-.83.67-1.5 1.5-1.5s1.5.67 1.5 1.5S9.830 13 9 13s-1.5-.67-1.5-1.5zM16 17H8v-2h8v2zm-1-4c-.83 0-1.5-.67-1.5-1.5S14.170 10 15 10s1.5.67 1.5 1.5S15.830 13 15 13z"/></svg><span class="t m1" style="letter-spacing:0.28px;">Market-intelligence</span><svg class="ic " width="26.4" height="26.4" viewBox="0 0 24 24" style="fill:#64748b;"><path d="M19.830 7.500l-2.270-2.270c.07-.42.18-.81.32-1.150.08-.18.12-.37.12-.58 0-.83-.67-1.500-1.500-1.500-1.640 0-3.090.79-4 2h-5C4.460 4 2 6.460 2 9.500S4.500 21 4.500 21H10v-2h2v2h5.500l1.680-5.590 2.820-.94V7.500h-2.170zM13 9H8V7h5v2zm3 2c-.55 0-1-.45-1-1s.45-1 1-1 1 .45 1 1-.45 1-1 1z"/></svg><span class="t m2" style="letter-spacing:-0.35px;">€420</span></div>
    <div class="pend"><span class="t" style="letter-spacing:-0.39px;">Pending_approval</span></div>
  </div>
  <div class="ring"><svg width="96" height="96" viewBox="0 0 96 96"><circle cx="48" cy="48" r="42.35" fill="none" stroke="#e5e7eb" stroke-width="9"/><circle cx="48" cy="48" r="42.35" fill="none" stroke="#115e59" stroke-width="9" stroke-linecap="round" stroke-dasharray="218.2 266.1" transform="rotate(180 48 48)"/></svg><div class="rt"><span class="t" style="letter-spacing:-1.16px;">82%</span></div></div>
</div>
  </div>
  <div class="sbar l-sc"><i class="up"></i><b></b><i class="dn"></i></div>
</section>

    
<section class="card c2">
  <div class="ch"><svg class="ic " width="39.6" height="39.6" viewBox="0 0 24 24" style="fill:#115e59;"><path d="M7 18c-1.1 0-1.99.9-1.99 2S5.9 22 7 22s2-.9 2-2-.9-2-2-2zM1 2v2h2l3.6 7.59-1.35 2.45c-.16.28-.25.61-.25.96 0 1.1.9 2 2 2h12v-2H7.42c-.14 0-.25-.11-.25-.25l.03-.12.9-1.63h7.45c.75 0 1.41-.41 1.75-1.03l3.58-6.49c.08-.14.12-.31.12-.48 0-.55-.45-1-1-1H5.21l-.94-2H1zm16 16c-1.1 0-1.99.9-1.99 2s.89 2 1.99 2 2-.9 2-2-.9-2-2-2z"/></svg><h2><span class="t" style="letter-spacing:-0.55px;">Reorder A-Frame Signage for Chicago North</span></h2></div>
  <div class="scroll2">
    <div class="sh"><svg class="ic " width="39.6" height="39.6" viewBox="0 0 24 24" style="fill:#115e59;"><path d="M13 8.57c-.79 0-1.43.64-1.43 1.43s.64 1.43 1.43 1.43 1.43-.64 1.43-1.43-.64-1.43-1.43-1.43zM13 3C9.25 3 6.2 5.94 6.02 9.64L4.1 12.2c-.25.33-.01.8.4.8H6v3c0 1.1.9 2 2 2h1v3h7v-4.68c2.36-1.12 4-3.53 4-6.32 0-3.87-3.13-7-7-7zm3 7c0 .13-.01.26-.02.39l.83.66c.08.06.1.16.05.25l-.8 1.39c-.05.09-.16.12-.24.09l-.99-.4c-.21.16-.43.29-.67.39L14 13.83c-.01.1-.1.17-.2.17h-1.6c-.1 0-.18-.07-.2-.17l-.15-1.06c-.25-.1-.47-.23-.68-.39l-.99.4c-.09.03-.2 0-.25-.09l-.8-1.39c-.05-.08-.03-.19.05-.25l.84-.66c-.01-.13-.02-.26-.02-.39 0-.13.02-.27.04-.39l-.85-.66c-.08-.06-.1-.16-.05-.26l.8-1.38c.05-.09.15-.12.24-.09l1 .4c.2-.15.43-.29.67-.39L12 6.17c.02-.1.1-.17.2-.17h1.6c.1 0 .18.07.2.17l.15 1.06c.24.1.46.23.67.39l1-.4c.09-.03.2 0 .24.09l.8 1.38c.05.09.03.2-.05.26l-.85.66c.03.12.04.25.04.39z"/></svg><h3><span class="t" style="letter-spacing:0.08px;">AI Reasoning</span></h3></div>
    <div class="reason"><span class="t" style="letter-spacing:-0.24px;">AI-optimized reorder of 15 units of A-Frame Signage to prevent stockout at Chicago North. Market</span><br><span class="t" style="letter-spacing:-0.17px;">intelligence indicates favorable pricing window.</span></div>
    <div class="conf"><div class="cl"><span class="t" style="letter-spacing:0.01px;">Model Confidence</span></div><div class="bar"><div class="fill"></div></div><div class="cv"><span class="t" style="letter-spacing:-1.55px;">91%</span></div></div>
    <div class="hr"></div>
    <div class="sh sh2"><svg class="ic " width="39.6" height="39.6" viewBox="0 0 24 24" style="fill:#115e59;"><path d="M19 3H5c-1.100 0-2 .9-2 2v14c0 1.100.9 2 2 2h14c1.100 0 2-.9 2-2V5c0-1.100-.9-2-2-2zM9 17H7v-5h2v5zm4 0h-2v-3h2v3zm0-5h-2v-2h2v2zm4 5h-2V7h2v10z"/></svg><h3><span class="t" style="letter-spacing:0.04px;">Decision Factors</span></h3></div>
    <div class="fc">
  <div class="fh"><div class="ft"><span class="t" style="letter-spacing:0.12px;">Stockout Risk Prevention</span></div><div class="fw"><span class="t" style="letter-spacing:-1.30px;">Weight: 30%</span></div></div>
  <div class="fd"><span class="t" style="letter-spacing:-0.22px;">Current stock will deplete in 5 days at forecasted demand rate</span></div>
  <div class="fi"><svg class="ic " width="31" height="31" viewBox="0 0 24 24" style="fill:#10b981;position:relative;top:1px"><path d="M1 21h4V9H1v12zm22-11c0-1.100-.9-2-2-2h-6.310l.95-4.570.03-.32c0-.41-.17-.79-.44-1.060L14.170 1 7.590 7.590C7.220 7.950 7 8.450 7 9v10c0 1.100.9 2 2 2h9c.83 0 1.540-.5 1.840-1.220l3.020-7.050c.09-.23.14-.47.14-.73v-2z"/></svg><span class="t" style="letter-spacing:0.54px;">Positive Impact</span></div>
</div><div class="fc">
  <div class="fh"><div class="ft"><span class="t" style="letter-spacing:0.55px;">Market Price Optimization</span></div><div class="fw"><span class="t" style="letter-spacing:-1.30px;">Weight: 25%</span></div></div>
  <div class="fd"><span class="t" style="letter-spacing:-0.21px;">Current commodity prices 8% below 90-day average</span></div>
  <div class="fi"><svg class="ic " width="31" height="31" viewBox="0 0 24 24" style="fill:#10b981;position:relative;top:1px"><path d="M1 21h4V9H1v12zm22-11c0-1.100-.9-2-2-2h-6.310l.95-4.570.03-.32c0-.41-.17-.79-.44-1.060L14.170 1 7.590 7.590C7.220 7.950 7 8.450 7 9v10c0 1.100.9 2 2 2h9c.83 0 1.540-.5 1.840-1.220l3.020-7.050c.09-.23.14-.47.14-.73v-2z"/></svg><span class="t" style="letter-spacing:0.54px;">Positive Impact</span></div>
</div><div class="fc">
  <div class="fh"><div class="ft"><span class="t" style="letter-spacing:0.21px;">Supplier Performance</span></div><div class="fw"><span class="t" style="letter-spacing:-1.30px;">Weight: 20%</span></div></div>
  <div class="fd"><span class="t" style="letter-spacing:-0.32px;">Selected supplier has 98.5% on-time delivery rate</span></div>
  <div class="fi"><svg class="ic " width="31" height="31" viewBox="0 0 24 24" style="fill:#10b981;position:relative;top:1px"><path d="M1 21h4V9H1v12zm22-11c0-1.100-.9-2-2-2h-6.310l.95-4.570.03-.32c0-.41-.17-.79-.44-1.060L14.170 1 7.590 7.590C7.220 7.950 7 8.450 7 9v10c0 1.100.9 2 2 2h9c.83 0 1.540-.5 1.840-1.220l3.020-7.050c.09-.23.14-.47.14-.73v-2z"/></svg><span class="t" style="letter-spacing:0.54px;">Positive Impact</span></div>
</div><div class="fc">
  <div class="fh"><div class="ft"><span class="t" style="letter-spacing:0.03px;">Demand Forecast Confidence</span></div><div class="fw"><span class="t" style="letter-spacing:-1.30px;">Weight: 15%</span></div></div>
  <div class="fd"><span class="t" style="letter-spacing:-0.51px;">Historical accuracy supports the forecast window</span></div>
  <div class="fi"><svg class="ic " width="31" height="31" viewBox="0 0 24 24" style="fill:#10b981;position:relative;top:1px"><path d="M1 21h4V9H1v12zm22-11c0-1.100-.9-2-2-2h-6.310l.95-4.570.03-.32c0-.41-.17-.79-.44-1.060L14.170 1 7.590 7.590C7.220 7.950 7 8.450 7 9v10c0 1.100.9 2 2 2h9c.83 0 1.540-.5 1.840-1.220l3.020-7.050c.09-.23.14-.47.14-.73v-2z"/></svg><span class="t" style="letter-spacing:0.54px;">Positive Impact</span></div>
</div>
  </div>
  <div class="sbar m-sc"><i class="up"></i><b></b><i class="dn"></i></div>
</section>

    
<section class="card c3">
  <div class="ch"><svg class="ic " width="39.6" height="39.6" viewBox="0 0 24 24" style="fill:#115e59;"><path d="M13 3c-4.970 0-9 4.030-9 9H1l3.890 3.890.07.14L9 12H6c0-3.870 3.130-7 7-7s7 3.130 7 7-3.130 7-7 7c-1.930 0-3.680-.79-4.940-2.060l-1.420 1.420C8.270 19.990 10.510 21 13 21c4.970 0 9-4.030 9-9s-4.030-9-9-9zm-1 5v5l4.280 2.540.72-1.210-3.500-2.080V8H12z"/></svg><h2><span class="t" style="letter-spacing:-0.10px;">Audit Trail</span></h2><div class="cnt"><span class="t" style="letter-spacing:-0.43px;">14 events</span></div></div>
  <div class="elist">
    <div class="ev">
  <div class="eav g"><svg class="ic " width="30.8" height="30.8" viewBox="0 0 24 24" style="fill:#115e59;"><path d="M17 12h-5v5h5v-5zM16 1v2H8V1H6v2H5c-1.110 0-1.990.9-1.990 2L3 19c0 1.100.89 2 2 2h14c1.100 0 2-.9 2-2V5c0-1.100-.9-2-2-2h-1V1h-2zm3 18H5V8h14v11z"/></svg></div>
  <div class="eb">
    <div class="eh"><div class="et"><span class="t" style="letter-spacing:1.39px;">Agent_completed</span></div><div class="etm"><span class="t" style="letter-spacing:-0.13px;">22:46:11</span></div></div>
    <div class="ed"><span class="t" style="letter-spacing:0.66px;">Phase review completed</span></div>
    <div class="em"><svg class="ic " width="26.4" height="26.4" viewBox="0 0 24 24" style="fill:#64748b;"><path d="M19.140 12.940c.04-.3.06-.61.06-.94 0-.32-.02-.64-.07-.94l2.030-1.580c.18-.14.23-.41.12-.61l-1.920-3.320c-.12-.22-.37-.29-.59-.22l-2.390.96c-.5-.38-1.030-.7-1.620-.94l-.36-2.540c-.04-.24-.24-.41-.48-.41h-3.840c-.24 0-.43.17-.47.41l-.36 2.540c-.59.24-1.130.57-1.620.94l-2.390-.96c-.22-.08-.47 0-.59.22L2.740 8.870c-.12.21-.08.47.12.61l2.030 1.580c-.05.3-.09.63-.09.94s.02.64.07.94l-2.030 1.580c-.18.14-.23.41-.12.61l1.920 3.320c.12.22.37.29.59.22l2.390-.96c.5.38 1.030.7 1.620.94l.36 2.540c.05.24.24.41.48.41h3.840c.24 0 .44-.17.47-.41l.36-2.540c.59-.24 1.130-.56 1.620-.94l2.390.96c.22.08.47 0 .59-.22l1.920-3.320c.12-.22.07-.47-.12-.61l-2.010-1.580zM12 15.600c-1.980 0-3.600-1.620-3.600-3.600s1.620-3.600 3.600-3.600 3.600 1.620 3.600 3.600-1.620 3.600-3.600 3.600z"/></svg><span class="t" style="letter-spacing:-0.97px;">System</span></div>
  </div>
</div><div class="ev">
  <div class="eav g"><svg class="ic " width="30.8" height="30.8" viewBox="0 0 24 24" style="fill:#115e59;"><path d="M17 12h-5v5h5v-5zM16 1v2H8V1H6v2H5c-1.110 0-1.990.9-1.990 2L3 19c0 1.100.89 2 2 2h14c1.100 0 2-.9 2-2V5c0-1.100-.9-2-2-2h-1V1h-2zm3 18H5V8h14v11z"/></svg></div>
  <div class="eb">
    <div class="eh"><div class="et"><span class="t" style="letter-spacing:1.39px;">Agent_completed</span></div><div class="etm"><span class="t" style="letter-spacing:-0.36px;">22:46:05</span></div></div>
    <div class="ed"><span class="t" style="letter-spacing:0.85px;">Phase recommendation_generation</span><br><span class="t" style="letter-spacing:1.54px;">completed</span></div>
    <div class="em"><svg class="ic " width="26.4" height="26.4" viewBox="0 0 24 24" style="fill:#64748b;"><path d="M19.140 12.940c.04-.3.06-.61.06-.94 0-.32-.02-.64-.07-.94l2.030-1.580c.18-.14.23-.41.12-.61l-1.920-3.320c-.12-.22-.37-.29-.59-.22l-2.390.96c-.5-.38-1.030-.7-1.620-.94l-.36-2.540c-.04-.24-.24-.41-.48-.41h-3.840c-.24 0-.43.17-.47.41l-.36 2.540c-.59.24-1.130.57-1.620.94l-2.390-.96c-.22-.08-.47 0-.59.22L2.740 8.870c-.12.21-.08.47.12.61l2.030 1.580c-.05.3-.09.63-.09.94s.02.64.07.94l-2.030 1.580c-.18.14-.23.41-.12.61l1.920 3.320c.12.22.37.29.59.22l2.390-.96c.5.38 1.030.7 1.620.94l.36 2.540c.05.24.24.41.48.41h3.840c.24 0 .44-.17.47-.41l.36-2.540c.59-.24 1.130-.56 1.620-.94l2.390.96c.22.08.47 0 .59-.22l1.920-3.320c.12-.22.07-.47-.12-.61l-2.010-1.580zM12 15.600c-1.980 0-3.600-1.620-3.600-3.600s1.620-3.600 3.600-3.600 3.600 1.620 3.600 3.600-1.620 3.600-3.600 3.600z"/></svg><span class="t" style="letter-spacing:-0.97px;">System</span></div>
  </div>
</div><div class="ev">
  <div class="eav a"><svg class="ic " width="30.8" height="30.8" viewBox="0 0 24 24" style="fill:#d97706;"><path d="M19 9l1.250-2.750L23 5l-2.750-1.250L19 1l-1.250 2.750L15 5l2.750 1.250L19 9zm-7.500.5L9 4 6.500 9.500 1 12l5.500 2.500L9 20l2.500-5.500L17 12l-5.500-2.500zM19 15l-1.250 2.750L15 19l2.750 1.250L19 23l1.250-2.750L23 19l-2.750-1.250L19 15z"/></svg></div>
  <div class="eb">
    <div class="eh"><div class="et"><span class="t" style="letter-spacing:1.17px;">Recommendation_generated</span></div><div class="etm"><span class="t" style="letter-spacing:-0.36px;">22:46:05</span></div></div>
    <div class="ed"><span class="t" style="letter-spacing:0.61px;">Supplier diversification: Vinyl Banners</span></div>
    <div class="em"><svg class="ic " width="26.4" height="26.4" viewBox="0 0 24 24" style="fill:#64748b;"><path d="M12 12c2.210 0 4-1.790 4-4s-1.790-4-4-4-4 1.790-4 4 1.790 4 4 4zm0 2c-2.670 0-8 1.340-8 4v2h16v-2c0-2.660-5.330-4-8-4z"/></svg><span class="t" style="letter-spacing:-0.06px;">supplier-analyzer</span></div>
  </div>
</div><div class="ev">
  <div class="eav a"><svg class="ic " width="30.8" height="30.8" viewBox="0 0 24 24" style="fill:#d97706;"><path d="M19 9l1.250-2.750L23 5l-2.750-1.250L19 1l-1.250 2.750L15 5l2.750 1.250L19 9zm-7.500.5L9 4 6.500 9.500 1 12l5.500 2.500L9 20l2.500-5.500L17 12l-5.500-2.500zM19 15l-1.250 2.750L15 19l2.750 1.250L19 23l1.250-2.750L23 19l-2.750-1.250L19 15z"/></svg></div>
  <div class="eb">
    <div class="eh"><div class="et"><span class="t" style="letter-spacing:1.17px;">Recommendation_generated</span></div><div class="etm"><span class="t" style="letter-spacing:-0.36px;">22:46:05</span></div></div>
    <div class="ed"><span class="t" style="letter-spacing:0.71px;">Market opportunity: Business Cards</span><br><span class="t" style="letter-spacing:0.60px;">Standard</span></div>
    <div class="em"><svg class="ic " width="26.4" height="26.4" viewBox="0 0 24 24" style="fill:#64748b;"><path d="M12 12c2.210 0 4-1.790 4-4s-1.790-4-4-4-4 1.790-4 4 1.790 4 4 4zm0 2c-2.670 0-8 1.340-8 4v2h16v-2c0-2.660-5.330-4-8-4z"/></svg><span class="t" style="letter-spacing:0.18px;">market-intelligence</span></div>
  </div>
</div><div class="ev">
  <div class="eav a"><svg class="ic " width="30.8" height="30.8" viewBox="0 0 24 24" style="fill:#d97706;"><path d="M19 9l1.250-2.750L23 5l-2.750-1.250L19 1l-1.250 2.750L15 5l2.750 1.250L19 9zm-7.500.5L9 4 6.500 9.500 1 12l5.500 2.500L9 20l2.500-5.500L17 12l-5.500-2.500zM19 15l-1.250 2.750L15 19l2.750 1.250L19 23l1.250-2.750L23 19l-2.750-1.250L19 15z"/></svg></div>
  <div class="eb">
    <div class="eh"><div class="et"><span class="t" style="letter-spacing:1.17px;">Recommendation_generated</span></div><div class="etm"><span class="t" style="letter-spacing:-0.36px;">22:46:05</span></div></div>
    <div class="ed"><span class="t" style="letter-spacing:0.34px;">Sustainable sourcing: Recycled Paper</span><br><span class="t" style="letter-spacing:0.44px;">Stock</span></div>
    <div class="em"><svg class="ic " width="26.4" height="26.4" viewBox="0 0 24 24" style="fill:#64748b;"><path d="M12 12c2.210 0 4-1.790 4-4s-1.790-4-4-4-4 1.790-4 4 1.790 4 4 4zm0 2c-2.670 0-8 1.340-8 4v2h16v-2c0-2.660-5.330-4-8-4z"/></svg><span class="t" style="letter-spacing:0.20px;">sustainability-optimizer</span></div>
  </div>
</div>
  </div>
  <div class="sbar a-sc"><i class="up"></i><b></b><i class="dn"></i></div>
</section>

    
<section class="card bb">
  <div class="bl"><svg class="ic " width="39.6" height="39.6" viewBox="0 0 24 24" style="fill:#f59e0b;"><path d="M15 3H5c-1.100 0-1.990.9-1.990 2L3 19c0 1.100.89 2 1.990 2H19c1.100 0 2-.9 2-2V9l-6-6zM8 17c-.55 0-1-.45-1-1s.45-1 1-1 1 .45 1 1-.45 1-1 1zm0-4c-.55 0-1-.45-1-1s.45-1 1-1 1 .45 1 1-.45 1-1 1zm0-4c-.55 0-1-.45-1-1s.45-1 1-1 1 .45 1 1-.45 1-1 1zm6 1V4.500l5.500 5.500H14z"/></svg><span class="t" style="letter-spacing:0.02px;">8 recommendations pending approval</span></div>
  <div class="btn back"><svg class="ic " width="52.8" height="52.8" viewBox="0 0 24 24" style="fill:#115e59;"><path d="M20 11H7.830l5.590-5.590L12 4l-8 8 8 8 1.410-1.410L7.830 13H20v-2z"/></svg><span class="t" style="letter-spacing:-1.08px;">Back</span></div>
  <div class="btn go"><span class="t" style="letter-spacing:1.41px;">Proceed to Approvals</span><svg class="ic " width="52.8" height="52.8" viewBox="0 0 24 24" style="fill:#fff;"><path d="M12 4l-1.410 1.410L16.170 11H4v2h12.170l-5.580 5.590L12 20l8-8z"/></svg></div>
</section>

  </div>
</main>
<div class="sbar p-sc"><i class="up"></i><b></b><i class="dn"></i></div>
</div>
</body></html>
